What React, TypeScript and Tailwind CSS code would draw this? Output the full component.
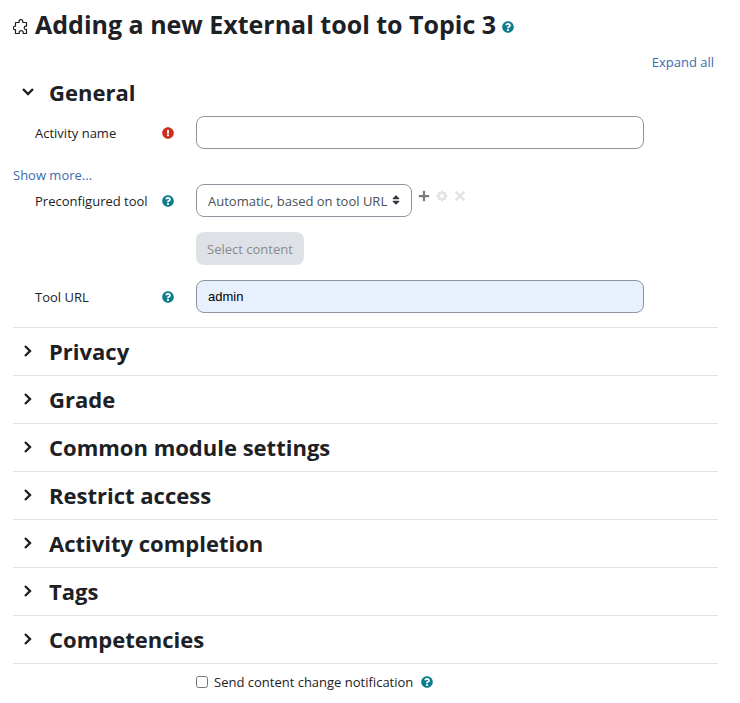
import React, { useState } from "react";
import {
  FaExclamationCircle,
  FaPlus,
  FaQuestionCircle,
  FaSort,
} from "react-icons/fa";

const sections = [
  "Privacy",
  "Grade",
  "Common module settings",
  "Restrict access",
  "Activity completion",
  "Tags",
  "Competencies",
];

const PuzzleIcon: React.FC = () => (
  <svg
    viewBox="0 0 15 16"
    className="w-[15px] h-4 mt-1.5 shrink-0"
    fill="none"
    stroke="#1d2125"
    strokeWidth="1.2"
    strokeLinejoin="round"
    aria-hidden="true"
  >
    <path d="M2.5 3.5H6V2.6a1.9 1.9 0 0 1 3.8 0V3.5H13.5V7.2H12.8a1.6 1.6 0 0 0 0 3.2H13.5V14.5H10.2V13.6a2 2 0 0 0-4 0V14.5H2.5V10.6H2a1.7 1.7 0 0 1 0-3.4H2.5Z" />
  </svg>
);

const Chevron: React.FC<{ open?: boolean }> = ({ open }) => (
  <svg
    viewBox="0 0 14 14"
    className={open ? "w-3.5 h-3.5 rotate-90" : "w-3.5 h-3.5"}
    fill="none"
    stroke="#1d2125"
    strokeWidth="2.4"
    aria-hidden="true"
  >
    <path d="M4 2L9 7L4 12" />
  </svg>
);

const GearIcon: React.FC = () => (
  <svg
    viewBox="0 0 12 12"
    className="w-3 h-3"
    fill="none"
    stroke="#e1e3e5"
    aria-hidden="true"
  >
    <circle cx="6" cy="6" r="3.2" strokeWidth="2.6" />
    <path
      strokeWidth="2"
      d="M6 .5V2M6 10V11.5M.5 6H2M10 6H11.5M2.1 2.1L3.2 3.2M8.8 8.8L9.9 9.9M2.1 9.9L3.2 8.8M8.8 3.2L9.9 2.1"
    />
  </svg>
);

const CrossIcon: React.FC = () => (
  <svg
    viewBox="0 0 12 12"
    className="w-3 h-3"
    fill="none"
    stroke="#dfe1e3"
    strokeWidth="2.2"
    aria-hidden="true"
  >
    <path d="M1.5 1.5L10.5 10.5M10.5 1.5L1.5 10.5" />
  </svg>
);

const HelpButton: React.FC<{ label: string }> = ({ label }) => (
  <button type="button" aria-label={label} className="text-[#0f7b8e] shrink-0">
    <FaQuestionCircle className="w-3 h-3" />
  </button>
);

interface SectionHeaderProps {
  title: string;
  open?: boolean;
}

const SectionHeader: React.FC<SectionHeaderProps> = ({ title, open }) => (
  <div className="flex items-center pl-2">
    <button
      type="button"
      aria-label={title}
      aria-expanded={!!open}
      className="mr-3.5"
    >
      <Chevron open={open} />
    </button>
    <h3 className="text-[22px] leading-8 font-bold">{title}</h3>
  </div>
);

interface FormRowProps {
  label: string;
  htmlFor: string;
  icon: React.ReactNode;
  children: React.ReactNode;
}

const FormRow: React.FC<FormRowProps> = ({ label, htmlFor, icon, children }) => (
  <div className="flex">
    <div className="w-[183px] shrink-0 h-[33px] pl-[22px] pr-[22px] flex items-center justify-between">
      <label htmlFor={htmlFor}>{label}</label>
      {icon}
    </div>
    <div className="flex-1 min-w-0">{children}</div>
  </div>
);

const App: React.FC = () => {
  const [name, setName] = useState("");
  const [toolUrl, setToolUrl] = useState("admin");
  const [notify, setNotify] = useState(false);

  return (
    <main className="bg-white min-h-screen pl-[13px] pr-[22px] pt-1.5 pb-3 text-[13px] leading-5 text-[#1d2125] font-['Open_Sans',sans-serif]">
      <div className="flex items-center">
        <PuzzleIcon />
        <h2 className="ml-[7px] mr-1.5 text-[25px] leading-9 font-bold">
          Adding a new External tool to Topic 3
        </h2>
        <div className="flex mt-1.5">
          <HelpButton label="Help with External tool" />
        </div>
      </div>

      <div className="mt-2.5 pr-1 text-right">
        <a href="#" className="text-[#3a6cb0]">
          Expand all
        </a>
      </div>

      <form onSubmit={(e) => e.preventDefault()}>
        <div className="mt-1">
          <SectionHeader title="General" open />
        </div>

        <div className="mt-2">
          <FormRow
            label="Activity name"
            htmlFor="name"
            icon={<FaExclamationCircle className="w-3 h-3 text-[#ca3120]" />}
          >
            <input
              id="name"
              type="text"
              value={name}
              onChange={(e) => setName(e.target.value)}
              className="block w-full max-w-[448px] h-[33px] px-[11px] border border-[#8f959e] rounded-lg"
            />
          </FormRow>
        </div>

        <div className="mt-4 h-[19px]">
          <a href="#" className="text-[#3a6cb0]">
            Show more...
          </a>
        </div>

        <FormRow
          label="Preconfigured tool"
          htmlFor="typeid"
          icon={<HelpButton label="Help with Preconfigured tool" />}
        >
          <div className="flex items-start">
            <div className="relative">
              <select
                id="typeid"
                className="block w-[216px] h-[33px] pl-[11px] border border-[#8f959e] rounded-lg appearance-none bg-white text-[#495057]"
              >
                <option>Automatic, based on tool URL</option>
              </select>
              <FaSort className="absolute right-2.5 top-2.5 w-3 h-3 text-[#343a40] pointer-events-none" />
            </div>
            <div className="flex gap-1.5 ml-1.5 mt-1.5">
              <button type="button" aria-label="Add preconfigured tool">
                <FaPlus className="w-3 h-3 text-[#777c81]" />
              </button>
              <button type="button" aria-label="Edit preconfigured tool" disabled>
                <GearIcon />
              </button>
              <button type="button" aria-label="Delete preconfigured tool" disabled>
                <CrossIcon />
              </button>
            </div>
          </div>
          <button
            type="button"
            disabled
            className="mt-[15px] h-[33px] px-[11px] rounded-lg bg-[#dee2e6] text-[#868b90]"
          >
            Select content
          </button>
        </FormRow>

        <div className="mt-[15px] mb-3.5">
          <FormRow
            label="Tool URL"
            htmlFor="toolurl"
            icon={<HelpButton label="Help with Tool URL" />}
          >
            <input
              id="toolurl"
              type="text"
              value={toolUrl}
              onChange={(e) => setToolUrl(e.target.value)}
              className="block w-full max-w-[448px] h-[33px] px-[11px] border border-[#8f959e] rounded-lg bg-[#e8f0fe] text-black font-['Liberation_Sans',sans-serif]"
            />
          </FormRow>
        </div>

        {sections.map((title) => (
          <div key={title} className="h-12 pt-[7px] border-t border-[#dee2e6]">
            <SectionHeader title={title} />
          </div>
        ))}

        <div className="flex items-center pt-2 pl-[183px] border-t border-[#dee2e6]">
          <input
            id="notify"
            type="checkbox"
            checked={notify}
            onChange={(e) => setNotify(e.target.checked)}
            className="w-3 h-3 mr-1.5"
          />
          <label htmlFor="notify" className="mr-2">
            Send content change notification
          </label>
          <HelpButton label="Help with Send content change notification" />
        </div>
      </form>
    </main>
  );
};

export default App;
